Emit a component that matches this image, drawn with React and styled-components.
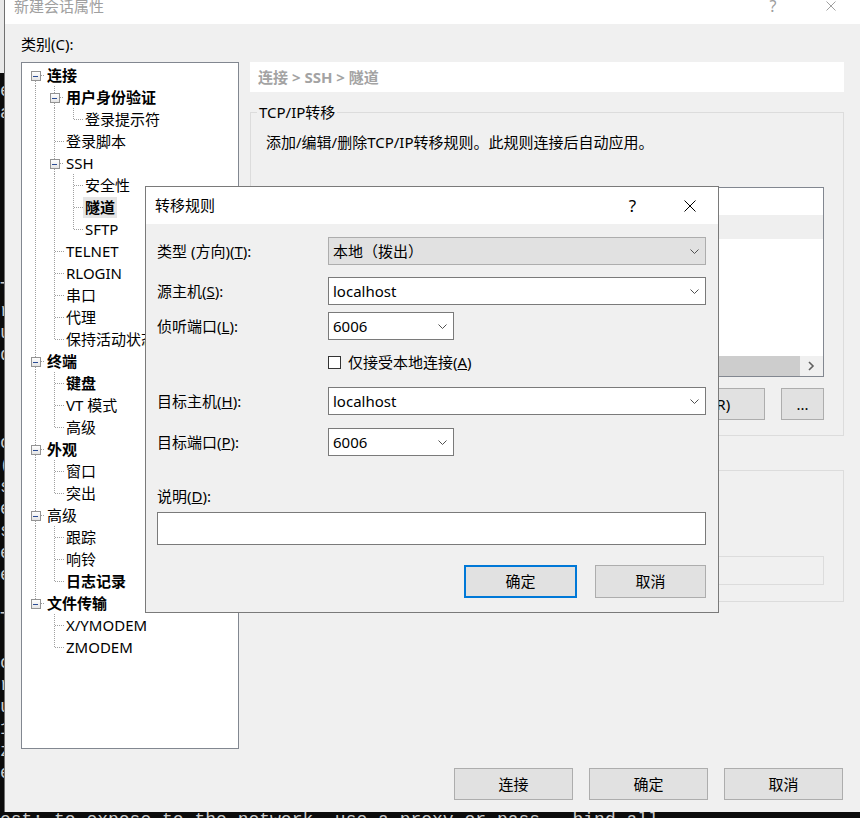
import React from "react";
import styled, { createGlobalStyle } from "styled-components";

const UI = `"Noto Sans", "Noto Sans CJK SC", sans-serif`;
const MONO = `"Liberation Mono", "DejaVu Sans Mono", monospace`;

const GlobalStyle = createGlobalStyle`
  html, body { margin: 0; padding: 0; background: #0c0c0c; }
  body { overflow: hidden; }
  #root { width: 860px; height: 818px; }
  *, *::before, *::after { box-sizing: border-box; }
`;

/* ---------- desktop / terminal behind ---------- */
const Desktop = styled.div`
  position: relative;
  width: 860px;
  height: 818px;
  overflow: hidden;
  background: #0c0c0c;
  display: grid;
  grid-template-columns: 4px 856px;
  grid-template-rows: 812px 6px;
`;
const TermStrip = styled.div`
  overflow: hidden;
  display: flex;
  flex-direction: column;
`;
const TermChrome = styled.div`
  height: 73px;
  flex: none;
  background: #e9e9e9;
`;
const TermOutput = styled.pre`
  margin: ${(p) => p.$mt}px 0 0 0;
  font-family: ${MONO};
  font-size: 18px;
  line-height: 22px;
  color: #cccccc;
  white-space: pre;
`;
const TermBottom = styled.div`
  grid-column: 1 / -1;
  overflow: hidden;
`;

/* ---------- main properties window ---------- */
const XWindow = styled.div`
  border-left: 1px solid #707070;
  background: #f0f0f0;
  display: flex;
  flex-direction: column;
  font-family: ${UI};
  font-size: 15px;
  color: #000;
  min-width: 0;
`;
const TitleBar = styled.div`
  height: 24px;
  flex: none;
  background: #fff;
  display: flex;
  align-items: flex-start;
`;
const WinTitle = styled.div`
  flex: 1;
  padding-left: 9px;
  line-height: 12px;
  color: #a0a0a0;
  white-space: nowrap;
`;
const CaptionBtn = styled.div`
  width: ${(p) => p.$w}px;
  height: ${(p) => p.$h}px;
  display: flex;
  align-items: center;
  justify-content: center;
  color: ${(p) => p.$color};
  font-family: "Noto Sans", sans-serif;
  font-size: ${(p) => p.$fs}px;
  line-height: 1;
`;
const WinBody = styled.div`
  flex: 1;
  min-height: 0;
  display: flex;
  flex-direction: column;
  padding: 12px 16px 12px 16px;
`;
const CategoryLabel = styled.div`
  height: 17px;
  line-height: 17px;
  margin-bottom: 9px;
`;
const MainRow = styled.div`
  display: flex;
  gap: 11px;
  height: 687px;
`;
const TreeBox = styled.div`
  width: 218px;
  flex: none;
  height: 100%;
  border: 1px solid #828790;
  background: #fff;
  padding-top: 1px;
  overflow: hidden;
`;
const TreeRowEl = styled.div`
  display: flex;
  height: 22px;
`;
const GuideSvg = styled.svg`
  flex: none;
  display: block;
`;
const TreeLabel = styled.span`
  margin-top: 1px;
  height: 21px;
  line-height: 21px;
  padding: 0 2px;
  white-space: nowrap;
  font-weight: ${(p) => (p.$bold ? 700 : 400)};
  background: ${(p) => (p.$sel ? "#e5e5e5" : "transparent")};
`;
const RightPane = styled.div`
  flex: 1;
  min-width: 0;
  display: flex;
  flex-direction: column;
`;
const Crumb = styled.div`
  height: 30px;
  background: #fff;
  padding-left: 8px;
  line-height: 30px;
  color: #a3a3a3;
  font-weight: 700;
`;
const Group = styled.fieldset`
  margin: ${(p) => p.$mt}px 0 0 0;
  padding: 0 0 ${(p) => p.$pb}px 0;
  border: 1px solid #dcdcdc;
  min-width: 0;
  display: flex;
  flex-direction: column;
`;
const GroupLegend = styled.legend`
  margin-left: 6px;
  padding: 0 2px;
  line-height: 17px;
`;
const GroupText = styled.div`
  margin: ${(p) => p.$mt}px 0 0 15px;
  line-height: 17px;
  white-space: nowrap;
`;
const ListView = styled.div`
  margin: 36px 19px 0 15px;
  height: 190px;
  border: 1px solid #828790;
  background: #fff;
  display: flex;
  flex-direction: column;
  overflow: hidden;
`;
const ListHeader = styled.div`
  height: 27px;
  display: flex;
  flex: none;
`;
const HeaderCell = styled.div`
  width: ${(p) => p.$w}px;
  padding-left: 6px;
  line-height: 27px;
  border-right: 1px solid #e5e5e5;
  white-space: nowrap;
`;
const ListRow = styled.div`
  height: 24px;
  display: flex;
  flex: none;
  background: ${(p) => (p.$sel ? "#efefef" : "#fff")};
`;
const ListCell = styled.div`
  width: ${(p) => p.$w}px;
  padding-left: 6px;
  line-height: 24px;
  white-space: nowrap;
`;
const ListSpacer = styled.div`
  flex: 1;
`;
const HScroll = styled.div`
  height: 20px;
  flex: none;
  display: flex;
  background: #f0f0f0;
`;
const ScrollArrow = styled.div`
  width: ${(p) => p.$w}px;
  display: flex;
  align-items: center;
  justify-content: center;
`;
const ScrollThumb = styled.div`
  flex: 1;
  background: #cdcdcd;
`;
const GroupBtnRow = styled.div`
  margin: 11px 19px 0 15px;
  display: flex;
  justify-content: flex-end;
  gap: 16px;
`;
const Btn = styled.button`
  width: ${(p) => p.$w}px;
  height: ${(p) => p.$h}px;
  padding: 0;
  font: inherit;
  color: #000;
  background: #e1e1e1;
  border: ${(p) => (p.$primary ? "2px solid #0078d7" : "1px solid #adadad")};
  display: flex;
  align-items: center;
  justify-content: center;
  line-height: 17px;
  white-space: nowrap;
  overflow: hidden;
`;
const OptRow = styled.div`
  margin: ${(p) => p.$mt}px 0 0 ${(p) => p.$ml}px;
  display: flex;
  align-items: center;
  height: 17px;
  line-height: 17px;
  white-space: nowrap;
`;
const CheckBox = styled.span`
  width: 13px;
  height: 13px;
  flex: none;
  border: 1px solid ${(p) => (p.$dim ? "#bcbcbc" : "#333")};
  background: #fff;
  margin-right: 7px;
  border-radius: ${(p) => (p.$round ? "50%" : "0")};
`;
const DisabledBox = styled.div`
  margin: 25px 19px 0 40px;
  height: 29px;
  border: 1px solid #dcdcdc;
  background: #f0f0f0;
  color: #a0a0a0;
  padding-left: 4px;
  line-height: 27px;
`;
const BottomBtns = styled.div`
  margin: 19px 1px 0 0;
  display: flex;
  justify-content: flex-end;
  gap: 16px;
`;

/* ---------- forward-rule dialog (modal over the window) ---------- */
const Dialog = styled.div`
  position: absolute;
  left: 145px;
  top: 186px;
  width: 574px;
  height: 427px;
  border: 1px solid #7a7a7a;
  background: #f0f0f0;
  display: flex;
  flex-direction: column;
  font-family: ${UI};
  font-size: 15px;
  color: #000;
`;
const DlgTitleBar = styled.div`
  height: 37px;
  flex: none;
  background: #fff;
  display: flex;
  align-items: center;
`;
const DlgTitle = styled.div`
  flex: 1;
  padding-left: 9px;
  line-height: 17px;
`;
const DlgBody = styled.div`
  display: flex;
  flex-direction: column;
  padding: 0 12px 0 11px;
`;
const FormRow = styled.div`
  margin-top: ${(p) => p.$mt}px;
  display: grid;
  grid-template-columns: 171px 1fr;
  align-items: center;
`;
const FieldLabel = styled.div`
  line-height: 17px;
  white-space: nowrap;
`;
const Combo = styled.div`
  width: ${(p) => (p.$w ? `${p.$w}px` : "100%")};
  height: 28px;
  border: 1px solid ${(p) => (p.$gray ? "#adadad" : "#7a7a7a")};
  background: ${(p) => (p.$gray ? "#e1e1e1" : "#fff")};
  display: flex;
  align-items: center;
  justify-content: space-between;
  padding-left: 4px;
`;
const ComboText = styled.span`
  line-height: 17px;
  white-space: nowrap;
`;
const Chevron = styled.svg`
  flex: none;
  margin-right: 6px;
  display: block;
`;
const CheckField = styled.div`
  grid-column: 2;
  display: flex;
  align-items: center;
  height: 17px;
  line-height: 17px;
`;
const BlockLabel = styled.div`
  margin-top: ${(p) => p.$mt}px;
  line-height: 17px;
`;
const TextBox = styled.div`
  margin-top: 7px;
  height: 33px;
  border: 1px solid #7a7a7a;
  background: #fff;
`;
const DlgBtns = styled.div`
  margin-top: 20px;
  display: flex;
  justify-content: flex-end;
  gap: 18px;
`;

/* ---------- data ---------- */
const TREE = [
  {
    label: "连接",
    bold: true,
    children: [
      { label: "用户身份验证", bold: true, children: [{ label: "登录提示符" }] },
      { label: "登录脚本" },
      {
        label: "SSH",
        children: [
          { label: "安全性" },
          { label: "隧道", bold: true, selected: true },
          { label: "SFTP" },
        ],
      },
      { label: "TELNET" },
      { label: "RLOGIN" },
      { label: "串口" },
      { label: "代理" },
      { label: "保持活动状态" },
    ],
  },
  {
    label: "终端",
    bold: true,
    children: [{ label: "键盘", bold: true }, { label: "VT 模式" }, { label: "高级" }],
  },
  { label: "外观", bold: true, children: [{ label: "窗口" }, { label: "突出" }] },
  {
    label: "高级",
    children: [{ label: "跟踪" }, { label: "响铃" }, { label: "日志记录", bold: true }],
  },
  { label: "文件传输", bold: true, children: [{ label: "X/YMODEM" }, { label: "ZMODEM" }] },
];

function flatten(nodes, depth = 0, trail = [], out = []) {
  nodes.forEach((n, i) => {
    const isLast = i === nodes.length - 1;
    out.push({
      label: n.label,
      bold: !!n.bold,
      selected: !!n.selected,
      depth,
      trail,
      isLast,
      isFirstRoot: depth === 0 && i === 0,
      hasKids: !!n.children,
    });
    if (n.children) flatten(n.children, depth + 1, [...trail, !isLast], out);
  });
  return out;
}
const ROWS = flatten(TREE);

/* first characters of the terminal lines peeking out at the left edge */
const TERM_LINES = [
  "e", "a", "", "", "", "", "", "", "",
  "T", "r", "u", "d", "", "", "",
  "c", "(", "s", "e", "s", "e", "e", "",
  "T", "", "c", "r", "u", "1", "z", "e",
];
const TERM_LAST = "est; to expose to the network, use a proxy or pass --bind_all";

/* ---------- drawings ---------- */
function Guides({ depth, trail, isLast, isFirstRoot, hasKids }) {
  const col = (k) => 13 + 19 * k;
  const c = col(depth);
  const W = c + 10;
  return (
    <GuideSvg width={W} height={22}>
      <defs>
        <linearGradient id="tvbox" x1="0" y1="0" x2="0" y2="1">
          <stop offset="0" stopColor="#ffffff" />
          <stop offset="1" stopColor="#e3e3e3" />
        </linearGradient>
      </defs>
      <g stroke="#a0a0a0" strokeWidth="1" strokeDasharray="1 1" shapeRendering="crispEdges">
        {trail.map((has, k) =>
          has ? <line key={k} x1={col(k) + 0.5} y1={0} x2={col(k) + 0.5} y2={22} /> : null
        )}
        {!isFirstRoot && <line x1={c + 0.5} y1={0} x2={c + 0.5} y2={hasKids ? 7 : 12} />}
        {!isLast && <line x1={c + 0.5} y1={hasKids ? 17 : 12} x2={c + 0.5} y2={22} />}
        <line x1={hasKids ? c + 6 : c + 1} y1={11.5} x2={W} y2={11.5} />
      </g>
      {hasKids && (
        <g shapeRendering="crispEdges">
          <rect x={c - 3.5} y={7.5} width={9} height={9} fill="url(#tvbox)" stroke="#939393" />
          <line x1={c - 2} y1={12} x2={c + 3} y2={12} stroke="#2b4c94" strokeWidth="1" />
        </g>
      )}
    </GuideSvg>
  );
}

const ChevronDown = () => (
  <Chevron width="9" height="5" viewBox="0 0 9 5">
    <polyline points="0.5,0.5 4.5,4.5 8.5,0.5" fill="none" stroke="#505050" strokeWidth="1" />
  </Chevron>
);

const CloseX = ({ size, color }) => (
  <svg width={size} height={size} viewBox={`0 0 ${size} ${size}`}>
    <line x1="0.5" y1="0.5" x2={size - 0.5} y2={size - 0.5} stroke={color} strokeWidth="1" />
    <line x1={size - 0.5} y1="0.5" x2="0.5" y2={size - 0.5} stroke={color} strokeWidth="1" />
  </svg>
);

const RightArrow = () => (
  <svg width="7" height="10" viewBox="0 0 7 10">
    <polyline points="1,1 5,5 1,9" fill="none" stroke="#606060" strokeWidth="1.6" />
  </svg>
);
const LeftArrow = () => (
  <svg width="7" height="10" viewBox="0 0 7 10">
    <polyline points="6,1 2,5 6,9" fill="none" stroke="#606060" strokeWidth="1.6" />
  </svg>
);

export default function App() {
  return (
    <>
      <GlobalStyle />
      <Desktop>
        <TermStrip>
          <TermChrome />
          <TermOutput $mt={7}>{TERM_LINES.join("\n")}</TermOutput>
        </TermStrip>

        <XWindow>
          <TitleBar>
            <WinTitle>新建会话属性</WinTitle>
            <CaptionBtn $w={58} $h={12} $fs={16} $color="#9d9d9d">?</CaptionBtn>
            <CaptionBtn $w={58} $h={11} $fs={15} $color="#9d9d9d">
              <CloseX size={10} color="#a0a0a0" />
            </CaptionBtn>
          </TitleBar>
          <WinBody>
            <CategoryLabel>类别(C):</CategoryLabel>
            <MainRow>
              <TreeBox>
                {ROWS.map((r, i) => (
                  <TreeRowEl key={i}>
                    <Guides {...r} />
                    <TreeLabel $bold={r.bold} $sel={r.selected}>
                      {r.label}
                    </TreeLabel>
                  </TreeRowEl>
                ))}
              </TreeBox>
              <RightPane>
                <Crumb>连接 &gt; SSH &gt; 隧道</Crumb>
                <Group $mt={12} $pb={15}>
                  <GroupLegend>TCP/IP转移</GroupLegend>
                  <GroupText $mt={13}>添加/编辑/删除TCP/IP转移规则。此规则连接后自动应用。</GroupText>
                  <ListView>
                    <ListHeader>
                      <HeaderCell $w={70}>类型</HeaderCell>
                      <HeaderCell $w={90}>侦听端口</HeaderCell>
                      <HeaderCell $w={110}>目标主机</HeaderCell>
                      <HeaderCell $w={90}>目标端口</HeaderCell>
                      <HeaderCell $w={90}>说明</HeaderCell>
                    </ListHeader>
                    <ListRow $sel>
                      <ListCell $w={70}>Local</ListCell>
                      <ListCell $w={90}>6006</ListCell>
                      <ListCell $w={110}>localhost</ListCell>
                      <ListCell $w={90}>6006</ListCell>
                    </ListRow>
                    <ListSpacer />
                    <HScroll>
                      <ScrollArrow $w={21}>
                        <LeftArrow />
                      </ScrollArrow>
                      <ScrollThumb />
                      <ScrollArrow $w={23}>
                        <RightArrow />
                      </ScrollArrow>
                    </HScroll>
                  </ListView>
                  <GroupBtnRow>
                    <Btn $w={118} $h={32}>添加(A)...</Btn>
                    <Btn $w={118} $h={32}>编辑(E)...</Btn>
                    <Btn $w={118} $h={32}>删除(R)</Btn>
                    <Btn $w={43} $h={32}>...</Btn>
                  </GroupBtnRow>
                </Group>
                <Group $mt={26} $pb={16}>
                  <GroupLegend>X11转移</GroupLegend>
                  <OptRow $mt={10} $ml={15}>
                    <CheckBox />
                    转发X11连接到(X):
                  </OptRow>
                  <OptRow $mt={8} $ml={40}>
                    <CheckBox $round $dim />
                    X DISPLAY:
                  </OptRow>
                  <DisabledBox>localhost:0.0</DisabledBox>
                </Group>
              </RightPane>
            </MainRow>
            <BottomBtns>
              <Btn $w={119} $h={32}>连接</Btn>
              <Btn $w={119} $h={32}>确定</Btn>
              <Btn $w={119} $h={32}>取消</Btn>
            </BottomBtns>
          </WinBody>
        </XWindow>

        <TermBottom>
          <TermOutput $mt={-3}>{TERM_LAST}</TermOutput>
        </TermBottom>

        <Dialog>
          <DlgTitleBar>
            <DlgTitle>转移规则</DlgTitle>
            <CaptionBtn $w={57} $h={37} $fs={17} $color="#000">?</CaptionBtn>
            <CaptionBtn $w={57} $h={37} $fs={15} $color="#000">
              <CloseX size={12} color="#000" />
            </CaptionBtn>
          </DlgTitleBar>
          <DlgBody>
            <FormRow $mt={13}>
              <FieldLabel>
                类型 (方向)(<u>T</u>):
              </FieldLabel>
              <Combo $gray>
                <ComboText>本地（拨出）</ComboText>
                <ChevronDown />
              </Combo>
            </FormRow>
            <FormRow $mt={12}>
              <FieldLabel>
                源主机(<u>S</u>):
              </FieldLabel>
              <Combo>
                <ComboText>localhost</ComboText>
                <ChevronDown />
              </Combo>
            </FormRow>
            <FormRow $mt={7}>
              <FieldLabel>
                侦听端口(<u>L</u>):
              </FieldLabel>
              <Combo $w={126}>
                <ComboText>6006</ComboText>
                <ChevronDown />
              </Combo>
            </FormRow>
            <FormRow $mt={14}>
              <CheckField>
                <CheckBox />
                仅接受本地连接(<u>A</u>)
              </CheckField>
            </FormRow>
            <FormRow $mt={16}>
              <FieldLabel>
                目标主机(<u>H</u>):
              </FieldLabel>
              <Combo>
                <ComboText>localhost</ComboText>
                <ChevronDown />
              </Combo>
            </FormRow>
            <FormRow $mt={13}>
              <FieldLabel>
                目标端口(<u>P</u>):
              </FieldLabel>
              <Combo $w={126}>
                <ComboText>6006</ComboText>
                <ChevronDown />
              </Combo>
            </FormRow>
            <BlockLabel $mt={32}>
              说明(<u>D</u>):
            </BlockLabel>
            <TextBox />
            <DlgBtns>
              <Btn $w={113} $h={33} $primary>确定</Btn>
              <Btn $w={111} $h={33}>取消</Btn>
            </DlgBtns>
          </DlgBody>
        </Dialog>
      </Desktop>
    </>
  );
}
